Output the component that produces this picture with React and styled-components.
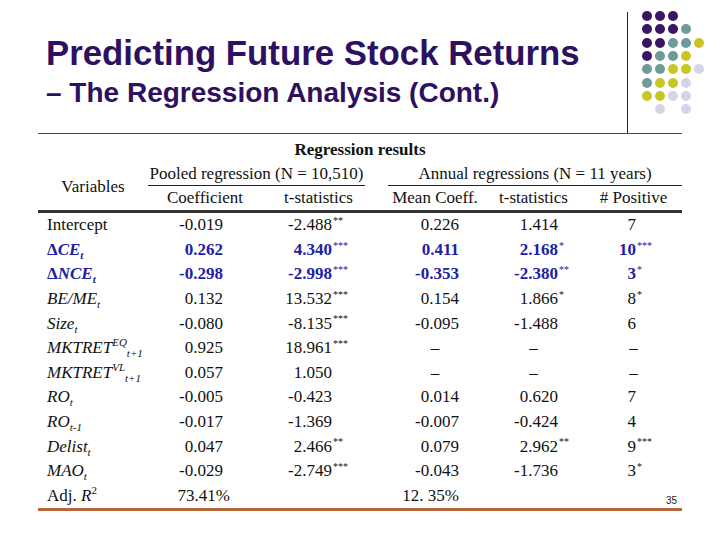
import React from 'react';
import styled, { createGlobalStyle } from 'styled-components';

const GlobalStyle = createGlobalStyle`
  html, body {
    margin: 0;
    padding: 0;
    background: #fff;
  }
`;

const COLS = '110px 114px 113px 13px 94px 103px 97px';

const Slide = styled.div`
  width: 720px;
  height: 540px;
  background: #fff;
  overflow: hidden;
  font-family: "Liberation Serif", "Times New Roman", serif;
  color: #111;
`;

const Header = styled.header`
  margin-left: 38px;
  width: 644px;
  height: 133px;
  display: flex;
  border-bottom: 1px solid #4a4a4a;
`;

const TitleBlock = styled.div`
  flex: 1;
  padding: 34px 0 0 8px;
  font-family: "Liberation Sans", Arial, sans-serif;
  font-weight: bold;
  color: #2e1060;
`;

const Title = styled.h1`
  margin: 0;
  font-size: 34.8px;
  line-height: 38px;
  font-weight: bold;
  white-space: nowrap;
`;

const Subtitle = styled.h2`
  margin: 4px 0 0;
  font-size: 28px;
  line-height: 34px;
  font-weight: bold;
  white-space: nowrap;
`;

const Logo = styled.svg`
  flex: 0 0 55px;
  overflow: visible;
`;

const HeadGrid = styled.div`
  margin-left: 38px;
  width: 644px;
  display: grid;
  grid-template-columns: ${COLS};
  grid-template-rows: 29px 23px 24px;
  border-bottom: 3px solid #333;
  font-size: 17px;
`;

const BodyGrid = styled.div`
  margin-left: 38px;
  width: 644px;
  display: grid;
  grid-template-columns: ${COLS};
  grid-auto-rows: 24.6px;
  border-bottom: 3px solid #b4683c;
  font-size: 17px;
`;

const Caption = styled.div`
  grid-column: 1 / -1;
  display: flex;
  align-items: center;
  justify-content: center;
  padding-top: 3px;
  font-weight: bold;
`;

const VarHead = styled.div`
  grid-column: 1;
  grid-row: 2 / 4;
  display: flex;
  align-items: center;
  justify-content: center;
`;

const Group = styled.div`
  grid-column: ${(p) => p.$span};
  grid-row: 2;
  margin-right: ${(p) => p.$mr || 0}px;
  display: flex;
  align-items: flex-end;
  justify-content: center;
  padding-bottom: 1px;
  border-bottom: 1px solid #222;
  white-space: nowrap;
`;

const SubHead = styled.div`
  grid-row: 3;
  grid-column: ${(p) => p.$col};
  display: flex;
  align-items: center;
  justify-content: center;
  white-space: nowrap;
`;

const Label = styled.div`
  display: flex;
  align-items: center;
  padding-left: 9px;
  white-space: nowrap;
  font-style: ${(p) => (p.$plain ? 'normal' : 'italic')};
  font-weight: ${(p) => (p.$hl ? 'bold' : 'normal')};
  color: ${(p) => (p.$hl ? '#2020a6' : '#111')};
`;

const Upright = styled.span`
  font-style: normal;
`;

const Sub = styled.sub`
  font-size: 11px;
  line-height: 0;
  vertical-align: -4px;
`;

const Sup = styled.sup`
  font-size: 11px;
  line-height: 0;
  vertical-align: 7px;
`;

const NumCell = styled.div`
  display: grid;
  grid-template-columns: ${(p) => p.$w}px auto;
  align-items: center;
  white-space: nowrap;
  font-weight: ${(p) => (p.$hl ? 'bold' : 'normal')};
  color: ${(p) => (p.$hl ? '#2020a6' : '#111')};
`;

const Num = styled.span`
  text-align: right;
`;

const Stars = styled.span`
  align-self: start;
  padding-top: 3px;
  margin-left: 1px;
  font-size: 10px;
  line-height: 1;
  font-weight: normal;
`;

const Dash = styled.div`
  display: flex;
  align-items: center;
  justify-content: center;
`;

const Blank = styled.div``;

const PageCell = styled.div`
  display: flex;
  align-items: flex-end;
  justify-content: flex-end;
  padding: 0 5px 2px 0;
  font-family: "Liberation Sans", Arial, sans-serif;
  font-size: 10px;
  color: #222;
`;

const P = '#3a1563';
const T = '#6e9b9a';
const Y = '#c8c627';
const L = '#d5d5e8';

const DOTS = [
  [P, P, P, null, null],
  [P, P, P, T, null],
  [P, P, T, T, Y],
  [P, T, T, Y, null],
  [T, T, Y, Y, L],
  [T, Y, Y, L, null],
  [Y, Y, L, L, null],
  [null, L, null, L, null],
];
const DOT_X = [20, 33, 46, 59, 72];
const DOT_Y = [16, 29, 43, 56, 69, 83, 96, 109];

const COL_W = { c: 75, t: 70, m: 71, t2: 76, p: 51 };

const rows = [
  { label: 'Intercept', plain: true, c: '-0.019', t: '-2.488**', m: '0.226', t2: '1.414', p: '7' },
  { label: <><Upright>Δ</Upright>CE<Sub>t</Sub></>, hl: true, c: '0.262', t: '4.340***', m: '0.411', t2: '2.168*', p: '10***' },
  { label: <><Upright>Δ</Upright>NCE<Sub>t</Sub></>, hl: true, c: '-0.298', t: '-2.998***', m: '-0.353', t2: '-2.380**', p: '3*' },
  { label: <>BE/ME<Sub>t</Sub></>, c: '0.132', t: '13.532***', m: '0.154', t2: '1.866*', p: '8*' },
  { label: <>Size<Sub>t</Sub></>, c: '-0.080', t: '-8.135***', m: '-0.095', t2: '-1.488', p: '6' },
  { label: <>MKTRET<Sup>EQ</Sup><Sub>t+1</Sub></>, c: '0.925', t: '18.961***', m: '–', t2: '–', p: '–' },
  { label: <>MKTRET<Sup>VL</Sup><Sub>t+1</Sub></>, c: '0.057', t: '1.050', m: '–', t2: '–', p: '–' },
  { label: <>RO<Sub>t</Sub></>, c: '-0.005', t: '-0.423', m: '0.014', t2: '0.620', p: '7' },
  { label: <>RO<Sub>t-1</Sub></>, c: '-0.017', t: '-1.369', m: '-0.007', t2: '-0.424', p: '4' },
  { label: <>Delist<Sub>t</Sub></>, c: '0.047', t: '2.466**', m: '0.079', t2: '2.962**', p: '9***' },
  { label: <>MAO<Sub>t</Sub></>, c: '-0.029', t: '-2.749***', m: '-0.043', t2: '-1.736', p: '3*' },
  { label: <>Adj. <i>R</i><Sup>2</Sup></>, plain: true, c: '73.41%', cw: 82, t: '', m: '12. 35%', t2: '', p: '', page: '35' },
];

function Value({ text, w, hl }) {
  if (!text) return <Blank />;
  if (text === '–') return <Dash>–</Dash>;
  const [, num, stars] = text.match(/^(.*?)(\*+)?$/);
  return (
    <NumCell $w={w} $hl={hl}>
      <Num>{num}</Num>
      {stars ? <Stars>{stars}</Stars> : <span />}
    </NumCell>
  );
}

export default function App() {
  return (
    <Slide>
      <GlobalStyle />
      <Header>
        <TitleBlock>
          <Title>Predicting Future Stock Returns</Title>
          <Subtitle>– The Regression Analysis (Cont.)</Subtitle>
        </TitleBlock>
        <Logo width="55" height="133">
          <line x1="0.5" y1="12" x2="0.5" y2="133" stroke="#222" strokeWidth="1" />
          {DOTS.map((row, r) =>
            row.map((fill, c) =>
              fill ? <circle key={`${r}-${c}`} cx={DOT_X[c]} cy={DOT_Y[r]} r="5" fill={fill} /> : null
            )
          )}
        </Logo>
      </Header>

      <HeadGrid>
        <Caption>Regression results</Caption>
        <VarHead>Variables</VarHead>
        <Group $span="2 / 4" $mr={10}>Pooled regression (N = 10,510)</Group>
        <Group $span="5 / 8">Annual regressions (N = 11 years)</Group>
        <SubHead $col={2}>Coefficient</SubHead>
        <SubHead $col={3}>t-statistics</SubHead>
        <SubHead $col={5}>Mean Coeff.</SubHead>
        <SubHead $col={6}>t-statistics</SubHead>
        <SubHead $col={7}>&#35; Positive</SubHead>
      </HeadGrid>

      <BodyGrid>
        {rows.map((r, i) => (
          <React.Fragment key={i}>
            <Label $hl={r.hl} $plain={r.plain}>
              <span>{r.label}</span>
            </Label>
            <Value text={r.c} w={r.cw || COL_W.c} hl={r.hl} />
            <Value text={r.t} w={COL_W.t} hl={r.hl} />
            <Blank />
            <Value text={r.m} w={COL_W.m} hl={r.hl} />
            <Value text={r.t2} w={COL_W.t2} hl={r.hl} />
            {r.page ? <PageCell>{r.page}</PageCell> : <Value text={r.p} w={COL_W.p} hl={r.hl} />}
          </React.Fragment>
        ))}
      </BodyGrid>
    </Slide>
  );
}
